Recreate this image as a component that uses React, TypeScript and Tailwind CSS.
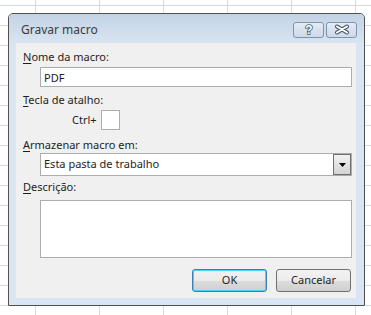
import { useState } from "react"

const font = "font-['Segoe_UI','Noto_Sans','Liberation_Sans',sans-serif]"

const Label = ({ u, rest, className = "" }: { u: string; rest: string; className?: string }) => (
  <div className={`pl-[7px] text-[11px] leading-[16px] text-[#1e1e1e] ${className}`}>
    <span className="underline underline-offset-[2px] decoration-[1px]">{u}</span>
    {rest}
  </div>
)

const TitleButton = ({ children }: { children: React.ReactNode }) => (
  <div className="flex h-[16px] w-[31px] items-center justify-center rounded-[3px] border border-[#8093ad] bg-[linear-gradient(to_bottom,#e4ecf5,#ccd9e9)]">
    {children}
  </div>
)

const DialogButton = ({ label, focused }: { label: string; focused?: boolean }) => (
  <button
    className={`h-[23px] w-[75px] rounded-[3px] border text-[11px] text-[#1e1e1e] bg-[linear-gradient(to_bottom,#f2f2f2_0%,#ebebeb_50%,#dddddd_51%,#cfcfcf_100%)] ${
      focused ? "border-[#3c7fb1] shadow-[inset_0_0_0_1px_#48d5f5]" : "border-[#707070]"
    }`}
  >
    {label}
  </button>
)

export default function App() {
  const [name, setName] = useState("PDF")
  return (
    <div
      className={`h-[315px] w-[371px] overflow-hidden bg-white pl-[8px] pt-[13px] ${font} bg-[linear-gradient(to_right,#d9d9d9_1px,transparent_1px),linear-gradient(to_bottom,#d9d9d9_1px,transparent_1px)] bg-size-[64px_20px] bg-position-[35px_5px]`}
    >
      <div className="flex h-[293px] w-[357px] flex-col rounded-t-[5px] border border-[#505050] bg-[#dae5f3]">
        {/* title bar */}
        <div className="flex h-[29px] items-center rounded-t-[4px] bg-[linear-gradient(to_bottom,#c3d3e6,#d9e4f1)] pl-[12px] pr-[7px]">
          <span className="flex-1 pt-[2px] text-[12px] text-[#3b3b3b]">Gravar macro</span>
          <div className="mt-[2px] flex gap-[2px]">
            <TitleButton>
              <svg width="12" height="13" viewBox="0 0 12 13">
                <text
                  x="6"
                  y="11"
                  textAnchor="middle"
                  fontSize="12"
                  fontWeight="bold"
                  fontFamily="Liberation Sans, sans-serif"
                  fill="#ffffff"
                  stroke="#4a5563"
                  strokeWidth="1.6"
                  paintOrder="stroke"
                >
                  ?
                </text>
              </svg>
            </TitleButton>
            <TitleButton>
              <svg width="16" height="11" viewBox="0 0 16 11">
                <path d="M3 2.5 L13 8.5 M13 2.5 L3 8.5" stroke="#4a5563" strokeWidth="4" strokeLinecap="round" />
                <path d="M3 2.5 L13 8.5 M13 2.5 L3 8.5" stroke="#ffffff" strokeWidth="2" strokeLinecap="round" />
              </svg>
            </TitleButton>
          </div>
        </div>

        {/* body */}
        <div className="mb-[7px] ml-[7px] flex w-[340px] flex-1 flex-col bg-[#f0f0f0] pt-[6px]">
          <Label u="N" rest="ome da macro:" />
          <input
            value={name}
            onChange={(e) => setName(e.target.value)}
            className="ml-[24px] mt-[2px] h-[20px] w-[312px] border border-[#abadb3] bg-white px-[3px] text-[11px] text-[#1e1e1e] outline-none"
          />
          <Label u="T" rest="ecla de atalho:" className="mt-[5px]" />
          <div className="mt-[2px] flex h-[20px] items-center pl-[56px]">
            <span className="text-[11px] text-[#1e1e1e]">Ctrl+</span>
            <div className="ml-[4px] h-[20px] w-[19px] border border-[#abadb3] bg-white" />
          </div>
          <Label u="A" rest="rmazenar macro em:" className="mt-[7px]" />
          <div className="ml-[24px] flex h-[23px] w-[312px] items-center border border-[#abadb3] bg-white">
            <span className="flex-1 pl-[3px] text-[11px] text-[#1e1e1e]">Esta pasta de trabalho</span>
            <div className="flex h-[21px] w-[18px] items-center justify-center border border-[#707070] bg-[linear-gradient(to_bottom,#f2f2f2,#d4d4d4)]">
              <svg width="7" height="4" viewBox="0 0 7 4">
                <path d="M0 0 H7 L3.5 4 Z" fill="#000" />
              </svg>
            </div>
          </div>
          <Label u="D" rest="escrição:" className="mt-[3px]" />
          <textarea className="ml-[24px] mt-[5px] block h-[58px] w-[312px] resize-none border border-[#abadb3] bg-white outline-none" />
          <div className="mt-[11px] flex justify-end gap-[9px] pr-[5px]">
            <DialogButton label="OK" focused />
            <DialogButton label="Cancelar" />
          </div>
        </div>
      </div>
    </div>
  )
}
